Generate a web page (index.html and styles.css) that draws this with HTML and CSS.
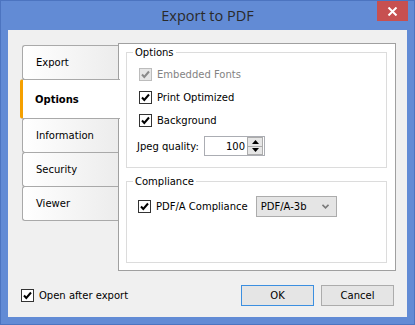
FILE: index.html
```html
<!DOCTYPE html>
<html lang="en">
<head>
    <meta charset="UTF-8" />
    <title>Export to PDF</title>
    <link rel="stylesheet" href="styles.css">
</head>
<body>
<div class="window">
    <div class="titlebar">
        <span></span>
        <h1 class="title">Export to PDF</h1>
        <button class="close" type="button">
            <svg width="11" height="9" viewBox="0 0 11 9"><path d="M1.5 0.5 L9.5 8.5 M9.5 0.5 L1.5 8.5" stroke="#fff" stroke-width="2"/></svg>
        </button>
    </div>

    <div class="client">
        <div class="main">
            <ul class="tabs">
                <li class="tab">Export</li>
                <li class="tab active">Options</li>
                <li class="tab">Information</li>
                <li class="tab">Security</li>
                <li class="tab">Viewer</li>
            </ul>

            <div class="panel">
                <fieldset class="group group-options">
                    <legend>Options</legend>
                    <label class="check disabled">
                        <span class="box"><svg width="11" height="11" viewBox="0 0 11 11"><path d="M2 5.5 L4.3 8 L9 2.5" fill="none" stroke-width="2"/></svg></span>
                        Embedded Fonts
                    </label>
                    <label class="check">
                        <span class="box"><svg width="11" height="11" viewBox="0 0 11 11"><path d="M2 5.5 L4.3 8 L9 2.5" fill="none" stroke-width="2"/></svg></span>
                        Print Optimized
                    </label>
                    <label class="check">
                        <span class="box"><svg width="11" height="11" viewBox="0 0 11 11"><path d="M2 5.5 L4.3 8 L9 2.5" fill="none" stroke-width="2"/></svg></span>
                        Background
                    </label>
                    <div class="field">
                        <span class="field-label">Jpeg quality:</span>
                        <div class="spin">
                            <span class="spin-value">100</span>
                            <div class="spin-btns">
                                <span class="spin-btn"><svg width="7" height="4" viewBox="0 0 7 4"><path d="M3.5 0 L7 4 L0 4 Z"/></svg></span>
                                <span class="spin-btn"><svg width="7" height="4" viewBox="0 0 7 4"><path d="M0 0 L7 0 L3.5 4 Z"/></svg></span>
                            </div>
                        </div>
                    </div>
                </fieldset>

                <fieldset class="group group-compliance">
                    <legend>Compliance</legend>
                    <div class="row">
                        <label class="check">
                            <span class="box"><svg width="11" height="11" viewBox="0 0 11 11"><path d="M2 5.5 L4.3 8 L9 2.5" fill="none" stroke-width="2"/></svg></span>
                            PDF/A Compliance
                        </label>
                        <div class="select">
                            <span>PDF/A-3b</span>
                            <svg width="7" height="5" viewBox="0 0 7 5"><path d="M0.5 0.8 L3.5 3.8 L6.5 0.8" fill="none" stroke="#7a7a7a" stroke-width="1.6"/></svg>
                        </div>
                    </div>
                </fieldset>
            </div>
        </div>

        <div class="footer">
            <label class="check">
                <span class="box"><svg width="11" height="11" viewBox="0 0 11 11"><path d="M2 5.5 L4.3 8 L9 2.5" fill="none" stroke-width="2"/></svg></span>
                Open after export
            </label>
            <div class="buttons">
                <button class="btn btn-default" type="button">OK</button>
                <button class="btn" type="button">Cancel</button>
            </div>
        </div>
    </div>
</div>
</body>
</html>
```

FILE: styles.css
```css
* {
    box-sizing: border-box;
}
body {
    margin: 0;
    font-family: "DejaVu Sans", sans-serif;
    font-size: 10px;
    color: #000;
}
.window {
    width: 415px;
    height: 325px;
    background: #628bd5;
    border: 1px solid #4c74c0;
}
.titlebar {
    display: grid;
    grid-template-columns: 1fr auto 1fr;
    height: 29px;
}
.title {
    margin: 0;
    align-self: center;
    font-family: "Open Sans", sans-serif;
    font-weight: normal;
    font-size: 14.5px;
    color: #2a2a2a;
}
.close {
    justify-self: end;
    width: 31px;
    height: 20px;
    margin: 0 6px 0 0;
    padding: 0;
    border: 0;
    background: #c75050;
    display: flex;
    align-items: center;
    justify-content: center;
}
.client {
    height: 287px;
    margin: 0 7px;
    background: #f0f0f0;
}
.main {
    display: flex;
    padding: 13px 0 0 14px;
}
.tabs {
    list-style: none;
    margin: 2px -1px 0 0;
    padding: 0;
    width: 97px;
}
.tab {
    height: 35px;
    margin-top: -1px;
    padding-left: 13px;
    display: flex;
    align-items: center;
    border: 1px solid #a9a9a9;
    border-right: 0;
    border-radius: 3px 0 0 3px;
    background: linear-gradient(to right, #ffffff, #ececec);
}
.tab:first-child {
    margin-top: 0;
}
.tab.active {
    position: relative;
    z-index: 1;
    height: 40px;
    margin-left: -2px;
    margin-right: -1px;
    padding-left: 12px;
    border-left: 3px solid #f5a000;
    background: #fff;
    font-weight: bold;
}
.panel {
    width: 278px;
    height: 228px;
    padding: 3px 8px 0 7px;
    border: 1px solid #a0a0a0;
    background: #fff;
}
.group {
    margin: 0;
    padding: 2px 10px 0;
    border: 1px solid #dcdcdc;
}
.group legend {
    margin-left: -4px;
    padding: 0 2px;
}
.group-options {
    padding-top: 5px;
    padding-bottom: 11px;
}
.group-compliance {
    margin-top: 8px;
    padding-top: 8px;
    padding-bottom: 44px;
}
.check {
    display: flex;
    align-items: center;
    height: 23px;
    margin-left: 2px;
}
.box {
    width: 13px;
    height: 13px;
    margin-right: 5px;
    border: 1px solid #333;
    background: #fff;
    display: flex;
    align-items: center;
    justify-content: center;
}
.box path {
    stroke: #000;
}
.check.disabled {
    color: #838383;
}
.check.disabled .box {
    border-color: #bcbcbc;
    background: #e6e6e6;
}
.check.disabled .box path {
    stroke: #8a8a8a;
}
.field {
    display: flex;
    align-items: center;
    margin-top: 4px;
}
.field-label {
    width: 67px;
}
.spin {
    display: flex;
    align-items: center;
    width: 61px;
    height: 20px;
    border: 1px solid #abadb3;
    background: #fff;
}
.spin-value {
    flex: 1;
    text-align: right;
    padding-right: 2px;
}
.spin-btns {
    display: flex;
    flex-direction: column;
    width: 16px;
    height: 18px;
    margin-right: 1px;
}
.spin-btn {
    flex: 1;
    display: flex;
    align-items: center;
    justify-content: center;
    background: #e6e6e6;
    border: 1px solid #acacac;
}
.spin-btn + .spin-btn {
    border-top: 0;
}
.row {
    display: flex;
    align-items: center;
}
.row .check {
    margin-left: 1px;
}
.select {
    display: flex;
    align-items: center;
    justify-content: space-between;
    width: 81px;
    height: 21px;
    margin-left: 8px;
    padding: 0 7px 0 4px;
    border: 1px solid #acacac;
    background: #e5e5e5;
}
.footer {
    display: flex;
    align-items: center;
    justify-content: space-between;
    padding: 14px 13px 0 13px;
}
.footer .check {
    margin-left: 0;
    height: 21px;
}
.buttons {
    display: flex;
    gap: 7px;
}
.btn {
    width: 73px;
    height: 21px;
    padding: 0;
    font-family: "DejaVu Sans", sans-serif;
    font-size: 10px;
    border: 1px solid #acacac;
    background: #e5e5e5;
    color: #000;
}
.btn-default {
    border-color: #3c8fe0;
}
```
